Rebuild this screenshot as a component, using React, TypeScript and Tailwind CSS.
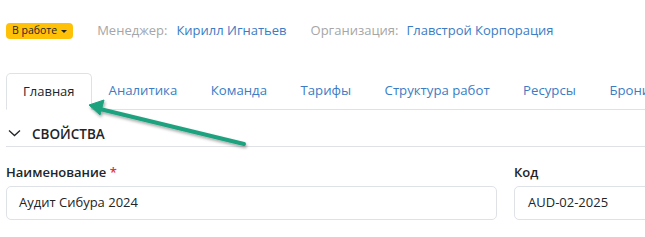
const tabs = ['Аналитика', 'Команда', 'Тарифы', 'Структура работ', 'Ресурсы', 'Брони'];

export default function App() {
  return (
    <div className="relative w-[645px] h-[237px] overflow-hidden bg-white font-['Open_Sans',sans-serif] text-[13px] text-[#212529]">
      {/* header */}
      <div className="flex items-center h-[62px] pl-[6px]">
        <span className="flex items-center gap-[4px] h-[16px] px-[6px] rounded-[4px] bg-[#ffc107] text-[10.5px] text-[#212529]">
          В работе
          <span className="border-x-[3px] border-t-[3px] border-x-transparent border-t-[#212529]" />
        </span>
        <span className="ml-[24px] text-[#a6a6a6]">Менеджер:</span>
        <span className="ml-[9px] text-[#3b7cc4]">Кирилл Игнатьев</span>
        <span className="ml-[24px] text-[#a6a6a6]">Организация:</span>
        <span className="ml-[8px] text-[#3b7cc4]">Главстрой Корпорация</span>
      </div>

      {/* tabs */}
      <div className="flex items-end ml-[6px] h-[48px] border-b border-[#dee2e6] whitespace-nowrap">
        <div className="h-[37px] px-[16px] flex items-center border border-b-white border-[#dee2e6] rounded-t-[5px] -mb-px bg-white">
          Главная
        </div>
        <div className="flex gap-[33.5px] pl-[17px] h-[36px] items-center text-[#3b7cc4] text-[13.2px]">
          {tabs.map((t) => (
            <span key={t}>{t}</span>
          ))}
        </div>
      </div>

      {/* section */}
      <div className="flex items-end gap-[11px] ml-[6px] h-[37px] pb-[3px] border-b border-[#dee2e6]">
        <svg width="13" height="8" viewBox="0 0 13 8" className="ml-[2px] mb-[6px]">
          <path d="M1 1.5 L6.5 6.5 L12 1.5" fill="none" stroke="#212529" strokeWidth="1.3" />
        </svg>
        <span className="text-[13.5px] font-semibold leading-[18px]">СВОЙСТВА</span>
      </div>

      {/* fields */}
      <div className="flex gap-[17px] ml-[6px] mt-[16px]">
        <div className="w-[491px] shrink-0 flex flex-col gap-[5px]">
          <label className="font-semibold leading-[18px]">
            Наименование <span className="text-[#dc3545]">*</span>
          </label>
          <div className="h-[34px] flex items-center px-[12px] border border-[#dee2e6] rounded-[5px]">
            Аудит Сибура 2024
          </div>
        </div>
        <div className="w-[200px] shrink-0 flex flex-col gap-[5px]">
          <label className="font-semibold leading-[18px]">Код</label>
          <div className="h-[34px] flex items-center px-[13px] border border-[#dee2e6] rounded-[5px]">
            AUD-02-2025
          </div>
        </div>
      </div>

      {/* annotation arrow */}
      <svg className="absolute left-0 top-0 pointer-events-none" width="645" height="237">
        <defs>
          <filter id="sh" x="-20%" y="-50%" width="140%" height="200%">
            <feDropShadow dx="1" dy="2" stdDeviation="1.5" floodColor="#000" floodOpacity="0.35" />
          </filter>
        </defs>
        <g filter="url(#sh)" fill="#1fa27e" stroke="#1fa27e">
          <line x1="244" y1="144" x2="100" y2="109" strokeWidth="4" strokeLinecap="round" />
          <polygon points="89,105 104,100 100,115" strokeWidth="1" strokeLinejoin="round" />
        </g>
      </svg>
    </div>
  );
}
